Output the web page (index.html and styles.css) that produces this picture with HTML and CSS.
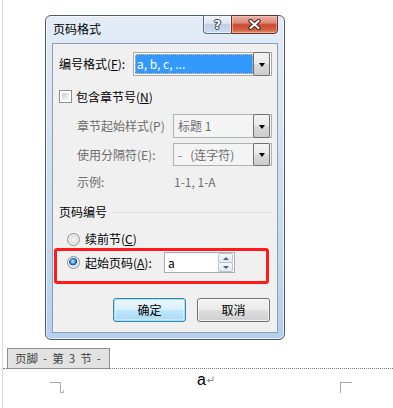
FILE: index.html
```html
<!DOCTYPE html>
<html lang="zh-CN">
<head>
<meta charset="utf-8">
<title>页码格式</title>
<link rel="stylesheet" href="styles.css">
</head>
<body>
<div class="page">
  <div class="dialog">
    <div class="titlebar">
      <span class="title">页码格式</span>
      <div class="caption-btns">
        <div class="cbtn help"><span>?</span></div>
        <div class="cbtn close">
          <svg width="13" height="11" viewBox="0 0 13 11">
            <path d="M2.5 2 L10.5 9 M10.5 2 L2.5 9" stroke="#4a1e18" stroke-width="4.2" stroke-linecap="round"/>
            <path d="M2.5 2 L10.5 9 M10.5 2 L2.5 9" stroke="#ffffff" stroke-width="2.2" stroke-linecap="round"/>
          </svg>
        </div>
      </div>
    </div>
    <div class="client">
      <div class="row row-format">
        <span class="lbl lbl-format">编号格式(<u>F</u>):</span>
        <div class="combo combo-format">
          <div class="combo-val selected">a, b, c, ...</div>
          <div class="dd"><i></i></div>
        </div>
      </div>
      <div class="row row-check">
        <span class="checkbox"></span>
        <span class="lbl">包含章节号(<u>N</u>)</span>
      </div>
      <div class="row row-sub row-p disabled">
        <span class="lbl lbl-sub">章节起始样式(P)</span>
        <div class="combo combo-sub">
          <div class="combo-val">标题 1</div>
          <div class="dd"><i></i></div>
        </div>
      </div>
      <div class="row row-sub row-e disabled">
        <span class="lbl lbl-sub">使用分隔符(E):</span>
        <div class="combo combo-sub">
          <div class="combo-val">-&nbsp;&nbsp;&nbsp;(连字符)</div>
          <div class="dd"><i></i></div>
        </div>
      </div>
      <div class="row row-sub row-ex disabled">
        <span class="lbl lbl-sub">示例:</span>
        <span class="example">1-1, 1-A</span>
      </div>
      <div class="group-head">
        <span class="lbl">页码编号</span>
        <span class="gline"></span>
      </div>
      <div class="row row-radio">
        <span class="radio"></span>
        <span class="lbl">续前节(<u>C</u>)</span>
      </div>
      <div class="redbox">
        <div class="redbox-row">
          <span class="radio on"></span>
          <span class="lbl lbl-start">起始页码(<u>A</u>):</span>
          <div class="spin">
            <span class="spin-val">a</span>
            <div class="spin-btns">
              <div class="sbtn"><i class="up"></i></div>
              <div class="sbtn"><i class="down"></i></div>
            </div>
          </div>
        </div>
      </div>
      <div class="btn-row">
        <div class="btn default">确定</div>
        <div class="btn">取消</div>
      </div>
    </div>
  </div>

  <div class="footer-band">
    <div class="footer-tag">页脚 - 第 3 节 -</div>
  </div>

  <div class="doc-row">
    <div class="mark mark-left"><span class="hook"></span></div>
    <div class="para">a<svg class="pmark" width="8" height="8" viewBox="0 0 8 8"><path d="M7 0.5 V4.5 H1.5" fill="none" stroke="#8a8a8a" stroke-width="1"/><path d="M3.5 2.5 L1.5 4.5 L3.5 6.5" fill="none" stroke="#8a8a8a" stroke-width="1"/></svg></div>
    <div class="mark mark-right"></div>
  </div>
</div>
</body>
</html>
```

FILE: styles.css
```css
* { box-sizing: border-box; }

html, body {
  margin: 0;
  padding: 0;
  background: #ffffff;
}

body {
  font-family: "Noto Sans CJK SC", "Noto Sans", sans-serif;
  font-size: 12px;
  line-height: 16px;
  color: #000000;
}

u { text-decoration: underline; text-underline-offset: 1px; }

.page {
  margin-left: 2px;
  border-left: 1px solid #d9d9d9;
  height: 408px;
  overflow: hidden;
}

/* ---------- dialog frame ---------- */
.dialog {
  margin: 15px 0 0 42px;
  width: 240px;
  border: 1px solid #4f5a66;
  border-radius: 6px;
  background: linear-gradient(180deg, #e3ecf7 0%, #d3e2f3 40%, #c3d8f0 75%, #b5cfee 100%);
  box-shadow: inset 0 0 0 1px rgba(255, 255, 255, 0.65);
}

.titlebar {
  height: 27px;
  display: flex;
  align-items: flex-start;
}

.title {
  padding: 5px 0 0 7px;
  font-size: 12px;
  line-height: 16px;
  color: #000;
}

.caption-btns {
  margin: -1px 6px 0 auto;
  display: flex;
  height: 19px;
}

.cbtn {
  height: 19px;
  display: flex;
  align-items: center;
  justify-content: center;
  border: 1px solid #5c6b7c;
}

.cbtn.help {
  width: 28px;
  border-right: none;
  border-radius: 0 0 0 4px;
  background: linear-gradient(180deg, #eef3f9 0%, #d9e4f1 45%, #c0d0e4 50%, #cbdaec 100%);
  box-shadow: inset 0 0 0 1px rgba(255,255,255,0.55);
}

.cbtn.help span {
  font-family: "DejaVu Sans", sans-serif;
  font-weight: bold;
  font-size: 12px;
  line-height: 12px;
  color: #ffffff;
  text-shadow: 0 0 1px #334, 0 0 1px #334, 1px 0 0 #445, -1px 0 0 #445, 0 1px 0 #445, 0 -1px 0 #445;
}

.cbtn.close {
  width: 47px;
  border-color: #6a3128;
  border-radius: 0 0 4px 0;
  background: linear-gradient(180deg, #eab2a6 0%, #da8a78 40%, #c9482f 52%, #d2603f 80%, #e28d68 100%);
  box-shadow: inset 0 0 0 1px rgba(255,220,210,0.45);
}

/* ---------- client area ---------- */
.client {
  margin: 0 6px 6px 6px;
  border: 1px solid #8d9eb2;
  background: #f0f0f0;
  padding-bottom: 10px;
}

.row {
  display: flex;
  align-items: center;
}

.lbl { white-space: nowrap; }

.row-format {
  margin-top: 8px;
  height: 24px;
  padding-left: 6px;
}

.lbl-format { width: 74px; }

.combo {
  height: 24px;
  display: flex;
  border: 1px solid #a7abb0;
  padding: 1px;
  background: #ffffff;
}

.combo-format { width: 139px; }

.combo-val {
  flex: 1;
  padding-left: 2px;
  line-height: 20px;
  white-space: nowrap;
  overflow: hidden;
}

.combo-val.selected {
  background: #3399ff;
  color: #ffffff;
  outline: 1px dotted #f3c27a;
  outline-offset: -1px;
}

.dd {
  width: 17px;
  margin: -2px 0;
  border: 1px solid #707070;
  border-radius: 2px;
  background: linear-gradient(180deg, #f4f4f4 0%, #e9e9e9 48%, #d9d9d9 52%, #cdcdcd 100%);
  display: flex;
  align-items: center;
  justify-content: center;
}

.dd i {
  width: 0;
  height: 0;
  border-left: 3.5px solid transparent;
  border-right: 3.5px solid transparent;
  border-top: 4px solid #000000;
  margin-top: 1px;
}

.row-check {
  margin-top: 14px;
  height: 13px;
  padding-left: 6px;
}

.checkbox {
  width: 13px;
  height: 13px;
  margin-right: 4px;
  border: 1px solid #8e8f8f;
  padding: 2px;
  background: linear-gradient(135deg, #c9ccd0 0%, #e6e7e9 55%, #fbfbfb 100%) content-box, #ffffff;
}

.row-sub { padding-left: 24px; }

.disabled { color: #6d6d6d; }

.lbl-sub { width: 96px; }

.row-p { margin-top: 11px; height: 24px; }
.row-e { margin-top: 5px; height: 23px; }
.row-e .combo { height: 23px; }

.combo-sub {
  width: 99px;
  border-color: #adb2b5;
  background: #f4f4f4;
}

.combo-sub .combo-val { line-height: 19px; padding-left: 3px; }

.row-ex { margin-top: 8px; height: 16px; }

.example { padding-left: 1px; }

.group-head {
  margin-top: 14px;
  height: 16px;
  display: flex;
  align-items: center;
  padding: 0 6px;
}

.gline {
  flex: 1;
  height: 1px;
  margin-left: 5px;
  margin-top: 1px;
  background: #d5dfe5;
}

.row-radio {
  margin-top: 11px;
  height: 16px;
  padding-left: 14px;
}

.radio {
  width: 13px;
  height: 13px;
  margin-right: 5px;
  border-radius: 50%;
  border: 1px solid #8e8f8f;
  background: radial-gradient(circle, #f5f5f5 0%, #e6e6e6 40%, #cfcfcf 75%, #ededed 100%);
  box-shadow: inset 0 0 0 1px #f8f8f8;
  flex: none;
}

.radio.on {
  background:
    radial-gradient(circle at 45% 40%, #d4ecff 0, #6fb6ef 1.6px, #1f6fc6 3px, #103f82 3.8px, rgba(16,63,130,0) 4.2px),
    radial-gradient(circle, #f5f5f5 0%, #e6e6e6 40%, #cfcfcf 75%, #ededed 100%);
}

.redbox {
  margin: 1px 0 0 1px;
  width: 215px;
  height: 36px;
  border: 3px solid #ff1b1b;
  border-radius: 3px;
}

.redbox-row {
  margin-top: 1px;
  height: 21px;
  display: flex;
  align-items: center;
  padding-left: 10px;
}

.lbl-start { width: 79px; }

.spin {
  width: 71px;
  height: 21px;
  border: 1px solid #abadb3;
  background: #ffffff;
  display: flex;
  align-items: center;
  padding: 0 1px 0 3px;
}

.spin-val { flex: 1; }

.spin-btns {
  width: 15px;
  height: 19px;
  display: flex;
  flex-direction: column;
}

.sbtn {
  flex: 1;
  border: 1px solid #b9c3cf;
  border-radius: 2px;
  background: linear-gradient(180deg, #f6f8fb 0%, #e3e9f0 100%);
  display: flex;
  align-items: center;
  justify-content: center;
}

.sbtn + .sbtn { margin-top: -1px; }

.sbtn i { width: 0; height: 0; border-left: 3px solid transparent; border-right: 3px solid transparent; }
.sbtn i.up { border-bottom: 3px solid #4e5f80; }
.sbtn i.down { border-top: 3px solid #4e5f80; }

.btn-row {
  margin-top: 14px;
  height: 24px;
  display: flex;
  gap: 11px;
  padding-left: 60px;
}

.btn {
  width: 73px;
  height: 24px;
  border: 1px solid #707070;
  border-radius: 3px;
  background: linear-gradient(180deg, #f2f2f2 0%, #ebebeb 48%, #dddddd 52%, #cfcfcf 100%);
  box-shadow: inset 0 0 0 1px rgba(255,255,255,0.7);
  display: flex;
  align-items: center;
  justify-content: center;
  font-size: 12px;
}

.btn.default {
  border-color: #3c7fb1;
  box-shadow: inset 0 0 0 1px #9fe4f8, inset 0 0 0 2px rgba(255,255,255,0.4);
  background: linear-gradient(180deg, #eaf6fd 0%, #d9f0fc 48%, #bee6fd 52%, #a7d9f5 100%);
}

/* ---------- document area ---------- */
.footer-band {
  margin-top: 8px;
  border-bottom: 1px dotted #7a7a7a;
  display: flex;
}

.footer-tag {
  margin: 0 0 -1px 4px;
  width: 103px;
  height: 21px;
  border: 1px solid #8c8c8c;
  background: #e2e2e2;
  color: #3f3f3f;
  padding-left: 7px;
  line-height: 19px;
  font-size: 11.5px;
  word-spacing: 2.5px;
  white-space: nowrap;
}

.doc-row {
  display: flex;
  align-items: flex-start;
}

.mark {
  position: relative;
  width: 11px;
  height: 11px;
  margin-top: 13px;
  border-top: 1px solid #a8a8a8;
}

.mark-left {
  margin-left: 47px;
  border-right: 1px solid #a8a8a8;
}

.hook {
  position: absolute;
  right: -4px;
  bottom: 0;
  width: 3px;
  height: 3px;
  border-right: 1px solid #b8b8b8;
  border-bottom: 1px solid #b8b8b8;
}

.mark-right {
  width: 12px;
  margin-left: auto;
  margin-right: 41px;
  border-left: 1px solid #a8a8a8;
}

.para {
  margin-left: 136px;
  padding-top: 2px;
  font-family: "Liberation Sans", Arial, sans-serif;
  font-size: 16px;
  line-height: 18px;
  color: #000;
  display: flex;
  align-items: flex-start;
}

.pmark { margin-top: 5px; margin-left: 0; }
```
